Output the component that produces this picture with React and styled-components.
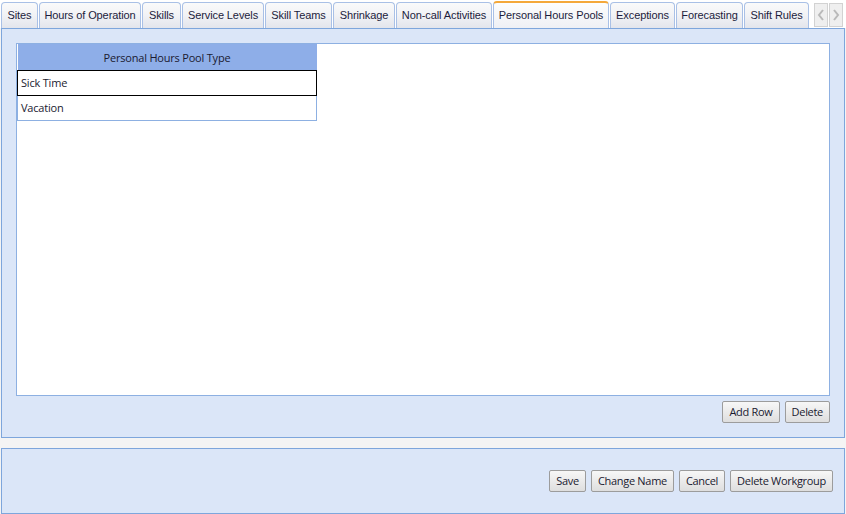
import React from 'react'
import styled, { createGlobalStyle } from 'styled-components'

const GlobalStyle = createGlobalStyle`
  html, body {
    margin: 0;
    padding: 0;
    background: #ffffff;
  }
  body {
    font-family: "Liberation Sans", Arial, sans-serif;
  }
`

const Page = styled.div`
  width: 846px;
  height: 514px;
  background: #f4f4f4;
  overflow: hidden;
`

const TabStrip = styled.div`
  display: flex;
  align-items: flex-end;
  height: 28px;
  padding-left: 1px;
  gap: 1px;
  background: #ffffff;
`

const Tab = styled.div`
  box-sizing: border-box;
  flex: none;
  width: ${p => p.$width}px;
  height: ${p => (p.$active ? '27px' : '26px')};
  display: flex;
  align-items: center;
  justify-content: center;
  padding-bottom: 1px;
  font-family: "Liberation Sans", Arial, sans-serif;
  font-size: 11px;
  letter-spacing: -0.1px;
  color: #1c1c3c;
  white-space: nowrap;
  border: 1px solid #a9c0e6;
  border-bottom: none;
  border-top: ${p => (p.$active ? '2px solid #f4a83a' : '1px solid #a9c0e6')};
  border-radius: 4px 4px 0 0;
  background: ${p =>
    p.$active
      ? 'linear-gradient(#fdfdfd, #eef0f5)'
      : 'linear-gradient(#fafafa 0%, #f2f3f6 45%, #e3e5ec 100%)'};
`

const Arrows = styled.div`
  display: flex;
  gap: 1px;
  margin-left: 4px;
  align-self: center;
  margin-top: 1px;
`

const ArrowBox = styled.div`
  box-sizing: border-box;
  width: 14px;
  height: 24px;
  border: 1px solid #d2d2d2;
  background: #efefef;
  display: flex;
  align-items: center;
  justify-content: center;
`

const Panel = styled.div`
  box-sizing: border-box;
  width: 844px;
  margin-left: 1px;
  border: 1px solid #7ea6dc;
  background: #dbe6f8;
`

const MainPanel = styled(Panel)`
  height: 410px;
  padding: 14px 14px 0 14px;
  display: flex;
  flex-direction: column;
`

const GridArea = styled.div`
  box-sizing: border-box;
  height: 353px;
  background: #ffffff;
  border: 1px solid #8db0e2;
`

const Grid = styled.table`
  border-collapse: collapse;
  width: 300px;
  font-family: "Open Sans", "Noto Sans", sans-serif;
  font-size: 11px;
  letter-spacing: -0.2px;
  color: #1a1a30;
`

const HeadCell = styled.th`
  height: 26px;
  padding: 0;
  background: #8eaee8;
  font-weight: normal;
  text-align: center;
`

const Cell = styled.td`
  box-sizing: border-box;
  height: 25px;
  padding: 0 0 1px 3px;
  border: 1px solid ${p => (p.$selected ? '#000000' : '#8db0e2')};
  border-top: ${p => (p.$selected ? '1px solid #000000' : 'none')};
`

const ButtonRow = styled.div`
  display: flex;
  justify-content: flex-end;
  gap: 5px;
  padding-top: ${p => p.$top || '5px'};
`

const Button = styled.button`
  box-sizing: border-box;
  height: 22px;
  padding: 0 6px 1px;
  font-family: "Open Sans", "Noto Sans", sans-serif;
  font-size: 11px;
  letter-spacing: -0.3px;
  color: #1a1a30;
  border: 1px solid #9c9c9c;
  border-radius: 2px;
  background: linear-gradient(#f7f7f7, #dedede);
  cursor: pointer;
`

const Gap = styled.div`
  height: 10px;
  background: #f4f4f4;
`

const BottomPanel = styled(Panel)`
  height: 66px;
  padding: 0 11px 1px 0;
  display: flex;
  align-items: center;
  justify-content: flex-end;
`

const tabs = [
  ['Sites', 37],
  ['Hours of Operation', 102],
  ['Skills', 39],
  ['Service Levels', 82],
  ['Skill Teams', 67],
  ['Shrinkage', 62],
  ['Non-call Activities', 96],
  ['Personal Hours Pools', 116],
  ['Exceptions', 65],
  ['Forecasting', 67],
  ['Shift Rules', 65],
]

const Chevron = ({ dir }) => (
  <svg width="8" height="12" viewBox="0 0 8 12">
    <path
      d={dir === 'left' ? 'M6 1 L2 6 L6 11' : 'M2 1 L6 6 L2 11'}
      fill="none"
      stroke="#b9b9b9"
      strokeWidth="2"
    />
  </svg>
)

export default function App() {
  return (
    <Page>
      <GlobalStyle />
      <TabStrip>
        {tabs.map(([t, w]) => (
          <Tab key={t} $width={w} $active={t === 'Personal Hours Pools'}>
            {t}
          </Tab>
        ))}
        <Arrows>
          <ArrowBox>
            <Chevron dir="left" />
          </ArrowBox>
          <ArrowBox>
            <Chevron dir="right" />
          </ArrowBox>
        </Arrows>
      </TabStrip>
      <MainPanel>
        <GridArea>
          <Grid>
            <thead>
              <tr>
                <HeadCell>Personal Hours Pool Type</HeadCell>
              </tr>
            </thead>
            <tbody>
              <tr>
                <Cell $selected>Sick Time</Cell>
              </tr>
              <tr>
                <Cell>Vacation</Cell>
              </tr>
            </tbody>
          </Grid>
        </GridArea>
        <ButtonRow>
          <Button>Add Row</Button>
          <Button>Delete</Button>
        </ButtonRow>
      </MainPanel>
      <Gap />
      <BottomPanel>
        <ButtonRow $top="0">
          <Button>Save</Button>
          <Button>Change Name</Button>
          <Button>Cancel</Button>
          <Button>Delete Workgroup</Button>
        </ButtonRow>
      </BottomPanel>
    </Page>
  )
}
